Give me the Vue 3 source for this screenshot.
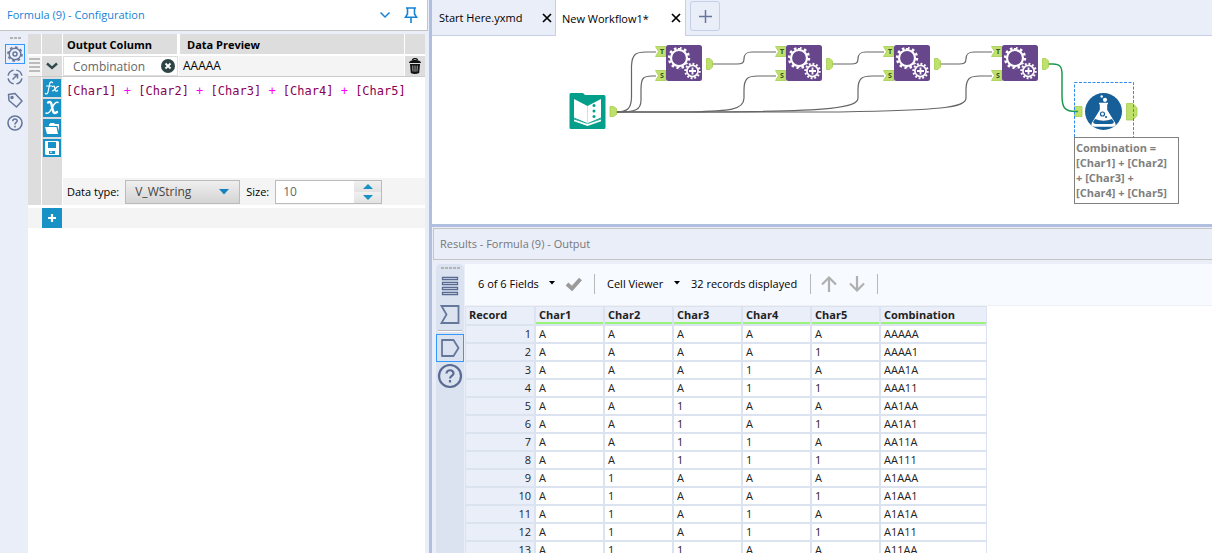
<script setup>
import { ref } from 'vue'

const outputColumn = ref('Combination')
const dataType = ref('V_WString')
const size = ref('10')

const tokens = ['[Char1]', '+', '[Char2]', '+', '[Char3]', '+', '[Char4]', '+', '[Char5]']

const columns = ['Char1', 'Char2', 'Char3', 'Char4', 'Char5']
const rows = Array.from({ length: 13 }, (_, i) =>
  i.toString(2).padStart(5, '0').replace(/0/g, 'A')
)

const appendTools = [666, 786, 894, 1002]

const wires = [
  'M616 112 C628 112 631 108 631.500 98 V66 C632 54 636 52 646 52 H656',
  'M616 112 C636 112 641 110 641 100 V90 C641 78 643 76 652 76 H656',
  'M616 112 H690 C730 111 744 110 744 98 V90 C744 78 748 76 758 76 H776',
  'M616 112 H720 C830 111 858 108 858 98 V90 C858 78 862 76 872 76 H884',
  'M616 112 H840 C940 110 966 108 966 98 V90 C966 78 970 76 980 76 H992',
  'M712 64 H737 C742 64 744 63 744 59 C744 54 746 52 752 52 H776',
  'M832 64 H851 C856 64 858 63 858 59 C858 54 860 52 866 52 H884',
  'M940 64 H959 C964 64 966 63 966 59 C966 54 968 52 974 52 H992'
]
</script>

<template>
  <div class="app">
    <aside class="config">
      <header class="config-title">
        <h1>Formula (9) - Configuration</h1>
        <button class="plain" aria-label="Window options">
          <svg width="12" height="8" viewBox="0 0 12 8"><path d="M1.500 1.500 6 6l4.500-4.500" fill="none" stroke="#1583d6" stroke-width="1.500" /></svg>
        </button>
        <button class="plain pin" aria-label="Pin panel">
          <svg width="14" height="16" viewBox="0 0 14 16"><path d="M2 1h10M3.500 1v6L1.500 10.200h11L10.500 7V1M7 10.500V16" fill="none" stroke="#1583d6" stroke-width="1.600" /></svg>
        </button>
      </header>
      <div class="config-body">
        <nav class="rail">
          <span class="dots"></span>
          <button class="rail-btn active" aria-label="Configuration">
            <svg width="18" height="18" viewBox="0 0 18 18" fill="none" stroke="#66779c">
              <circle cx="9" cy="9" r="5.800" stroke-width="1.400" />
              <circle cx="9" cy="9" r="7" stroke-width="1.600" pathLength="16" stroke-dasharray="1 1" />
              <circle cx="9" cy="9" r="2" stroke-width="1.500" />
            </svg>
          </button>
          <button class="rail-btn" aria-label="Navigation">
            <svg width="18" height="18" viewBox="0 0 18 18" fill="none" stroke="#66779c" stroke-width="1.500">
              <circle cx="9" cy="9" r="7" pathLength="40" stroke-dasharray="7.500 2.500" stroke-dashoffset="-1.200" />
              <path d="M6.500 11.500 11 7M7.500 6.500h4v4" />
            </svg>
          </button>
          <button class="rail-btn" aria-label="Annotation">
            <svg width="18" height="18" viewBox="0 0 18 18" fill="none" stroke="#66779c" stroke-width="1.500" stroke-linejoin="round">
              <path d="M2.500 3.500 9 2.500l7 7.500-5.500 6L3 9.500z" />
              <circle cx="6" cy="6.500" r="1" fill="#66779c" />
            </svg>
          </button>
          <button class="rail-btn" aria-label="Help">
            <svg width="18" height="18" viewBox="0 0 18 18" fill="none" stroke="#66779c" stroke-width="1.600">
              <circle cx="9" cy="9" r="7" />
              <path d="M6.800 7.200c0-3 4.600-2.800 4.400-.2C11 8.500 9 8.600 9 10.500M9 11.800v1.600" />
            </svg>
          </button>
        </nav>

        <main class="formula">
          <div class="grid head">
            <span class="cell"></span>
            <span class="cell"></span>
            <span class="cell label">Output Column</span>
            <span class="cell label preview">Data Preview</span>
            <span class="cell"></span>
          </div>
          <div class="grid row">
            <span class="grip"><i></i><i></i><i></i><i></i></span>
            <button class="cell square" aria-label="Collapse expression">
              <svg width="14" height="8" viewBox="0 0 14 8"><path d="M2 1.500 7 6l5-4.500" fill="none" stroke="#2f4a4a" stroke-width="2.400" /></svg>
            </button>
            <div class="column-name">
              <input v-model="outputColumn" aria-label="Output Column" />
              <button class="plain" aria-label="Clear column">
                <svg width="14" height="14" viewBox="0 0 14 14"><circle cx="7" cy="7" r="7" fill="#2f4545" /><path d="M4.500 4.500l5 5m0-5l-5 5" stroke="#fff" stroke-width="1.800" /></svg>
              </button>
            </div>
            <span class="value">AAAAA</span>
            <button class="cell square" aria-label="Delete expression">
              <svg width="14" height="16" viewBox="0 0 14 16">
                <path d="M4.500 2.500C4.500 0 9.500 0 9.500 2.500" fill="none" stroke="#111" stroke-width="1.400" />
                <path d="M1 5c0-4 12-4 12 0z" fill="#111" />
                <path d="M2 6h10l-.8 9q-4.200 2-8.400 0z" fill="#111" />
                <path d="M4.700 7.500l.3 6M7 7.500v6.300M9.300 7.500l-.3 6" stroke="#bbb" stroke-width=".9" />
              </svg>
            </button>
          </div>
          <div class="editor">
            <span class="gutter"></span>
            <div class="tools">
              <button class="blue" aria-label="Functions">
                <svg width="18" height="18" viewBox="0 0 18 18" fill="none" stroke="#fff" stroke-width="1.200" stroke-linecap="round">
                  <path d="M9.500 3.500C7.500 1.500 6.700 4 6.200 7L5 13c-.4 2-1.600 2.500-2.600 1.500M3.500 7h5M9.500 7.500c2-1.500 2.200.5 2.500 2.500s1 3 2.500 1.500M15.500 7.500c-2-.8-3.500 4.500-6 4.300" />
                </svg>
              </button>
              <button class="blue" aria-label="Columns and constants">
                <svg width="18" height="18" viewBox="0 0 18 18" fill="none" stroke="#fff" stroke-linecap="round">
                  <path d="M5 3.500c3-1.500 3.500 1 4.200 5s1.300 7 4.800 4.500" stroke-width="2.400" />
                  <path d="M15 3.500c-3-1.500-4.500 3-6 5.500s-3 6.500-6 5" stroke-width="1.500" />
                </svg>
              </button>
              <button class="blue" aria-label="Open expression">
                <svg width="18" height="18" viewBox="0 0 18 18"><path d="M6 7V5.500L7.500 4H11l1 1h4v7l-1.500-5z" fill="#fff" /><path d="M2 8h11.500l1.500 7H4z" fill="#fff" /></svg>
              </button>
              <button class="blue" aria-label="Save expression">
                <svg width="18" height="18" viewBox="0 0 18 18"><path d="M3 2h12l1 1v13H3l-1-1V2z" fill="#fff" /><path d="M5 3h8v6H5zM6 12h6v3H6z" fill="#1791c6" /><path d="M7 12.500h2V14H7z" fill="#fff" opacity=".7" /></svg>
              </button>
            </div>
            <div class="expression">
              <div class="code" contenteditable="true" role="textbox" aria-label="Expression" spellcheck="false"><template v-for="(t, i) in tokens" :key="i"><span :class="t === '+' ? 'op' : 'field'">{{ t }}</span>{{ i < tokens.length - 1 ? ' ' : '' }}</template></div>
              <div class="type-row">
                <label for="dtype">Data type:</label>
                <div class="select">
                  <select id="dtype" v-model="dataType"><option>V_WString</option></select>
                  <svg width="10" height="6" viewBox="0 0 10 6"><path d="M0 0h10L5 5.500z" fill="#1583c0" /></svg>
                </div>
                <label for="size">Size:</label>
                <div class="spin">
                  <input id="size" v-model="size" />
                  <div class="spin-buttons">
                    <button aria-label="Increase"><svg width="10" height="5" viewBox="0 0 10 5"><path d="M0 5h10L5 0z" fill="#1791c6" /></svg></button>
                    <button aria-label="Decrease"><svg width="10" height="5" viewBox="0 0 10 5"><path d="M0 0h10L5 5z" fill="#1791c6" /></svg></button>
                  </div>
                </div>
              </div>
            </div>
          </div>
          <div class="add-row">
            <button aria-label="Add expression">
              <svg width="10" height="10" viewBox="0 0 10 10"><path d="M5 1v8M1 5h8" stroke="#fff" stroke-width="2.200" /></svg>
            </button>
          </div>
        </main>
      </div>
    </aside>

    <section class="work">
      <div class="tabs">
        <div class="tab">
          <button class="plain name">Start Here.yxmd</button>
          <button class="plain" aria-label="Close Start Here.yxmd"><svg width="10" height="10" viewBox="0 0 10 10"><path d="M1 1l8 8M9 1L1 9" stroke="#000" stroke-width="1.700" /></svg></button>
        </div>
        <div class="tab current">
          <button class="plain name">New Workflow1*</button>
          <button class="plain" aria-label="Close New Workflow1"><svg width="10" height="10" viewBox="0 0 10 10"><path d="M1 1l8 8M9 1L1 9" stroke="#000" stroke-width="1.700" /></svg></button>
        </div>
        <button class="new-tab" aria-label="New workflow"><svg width="13" height="13" viewBox="0 0 13 13"><path d="M6.500 0v13M0 6.500h13" stroke="#66779c" stroke-width="1.500" /></svg></button>
      </div>

      <div class="canvas">
        <svg class="diagram" aria-label="Workflow">
          <g transform="translate(-432 -36)">
            <g fill="none" stroke="#666" stroke-width="1.200">
              <path v-for="w in wires" :key="w" :d="w" />
            </g>
            <path d="M1048 64 H1053 C1060 64 1062 67 1062 74 V96 C1062 108 1065 111.500 1076 111.500" fill="none" stroke="#1a9a50" stroke-width="1.500" />

            <g fill="#bfe16b" stroke="#a5cd52" stroke-width=".8">
              <path d="M610 106.500h3.500l3 2v6l-3 2H610z" />
              <path d="M1074.500 106.500h7.500v10h-7.500z" />
              <path d="M1126.500 103.500h6.500l4 4.500v7.500l-4 4.500h-6.500z" />
            </g>
            <path d="M1074 111.500h4" stroke="#1a9a50" stroke-width="1.500" />

            <g>
              <path d="M571 93h12l2 2h19q1.500 0 1.500 1.500v31q0 1.500-1.500 1.500H571q-1.500 0-1.500-1.500v-33q0-1.500 1.500-1.500z" fill="#049f8b" />
              <path d="M574 99l13.500 7 13.500-7v19.500l-13.500 5.500-13.500-5.500z" fill="#fff" />
              <path d="M574 118l13.500 5.700 13.500-5.700" fill="none" stroke="#049f8b" stroke-width="1" />
              <path d="M574 119.500l13.500 4.500 13.500-4.500v1.700l-13.500 4.800-13.500-4.800z" fill="#fff" />
              <path d="M587.500 106v18" stroke="#a9dcd5" stroke-width=".7" />
              <g fill="#049f8b"><circle cx="594" cy="105.500" r="1.500" /><circle cx="594" cy="111" r="1.500" /><circle cx="594" cy="116.500" r="1.500" /></g>
            </g>

            <g v-for="x in appendTools" :key="x" :transform="`translate(${x} 45)`">
              <g fill="#bfe16b" stroke="#a5cd52" stroke-width=".8">
                <path d="M-10.500 1.500H0v10h-10.500l3-5z" />
                <path d="M-10.500 25.500H0v10h-10.500l3-5z" />
                <path d="M40.500 13.500H44l2.500 2.500v6l-2.500 2.500h-3.500z" />
              </g>
              <text class="port" x="-4" y="9">T</text>
              <text class="port" x="-4" y="33">S</text>
              <rect width="36" height="36" rx="2.500" fill="#68468c" />
              <g fill="none" stroke="#fff">
                <circle cx="13" cy="13" r="8" stroke-width="2.200" />
                <circle cx="13" cy="13" r="9.900" stroke-width="2.600" pathLength="24" stroke-dasharray="1 1" />
                <circle cx="26.500" cy="26" r="9" fill="#68468c" stroke="none" />
                <circle cx="26.500" cy="26" r="5.600" stroke-width="1.700" />
                <circle cx="26.500" cy="26" r="7.200" stroke-width="2" pathLength="24" stroke-dasharray="1 1" />
                <path d="M26.500 22.500v7M23 26h7" stroke-width="1.800" />
              </g>
            </g>

            <g>
              <rect x="1074.500" y="82.500" width="59" height="56" fill="none" stroke="#2f8cf0" stroke-dasharray="3 1.500" />
              <circle cx="1103.500" cy="111.500" r="18.500" fill="#175f99" />
              <path d="M1099 103.500h9M1100.500 104v6l-8 13q-1.500 3 1.800 3h18.400q3.300 0 1.800-3l-8-13v-6z" fill="#fff" stroke="#fff" stroke-width="1.400" />
              <path d="M1095 119q8.500 3.500 17 0l2 3q-.3 2-3 2h-15q-2.700 0-3-2z" fill="#175f99" />
              <circle cx="1102.500" cy="114" r="2" fill="#fff" stroke="#175f99" stroke-width="1.200" />
              <circle cx="1106" cy="117" r="1.100" fill="#175f99" />
              <circle cx="1105" cy="99.800" r="2.100" fill="#fff" /><circle cx="1101.700" cy="96.500" r="1.200" fill="#fff" />
            </g>
          </g>
        </svg>
        <div class="annotation">Combination = [Char1] + [Char2] + [Char3] + [Char4] + [Char5]</div>
      </div>

      <div class="results">
        <h2>Results - Formula (9) - Output</h2>
        <div class="results-body">
          <nav class="side">
            <span class="dots wide"></span>
            <button aria-label="Messages">
              <svg width="22" height="22" viewBox="0 0 22 22" fill="none" stroke="#5a6b93" stroke-width="1.300"><path d="M3.500 2.500h15v2.200h-15zM3.500 7.500h15v2.200h-15zM3.500 12.500h15v2.200h-15zM3.500 17.500h15v2.200h-15z" /></svg>
            </button>
            <button aria-label="Input anchor">
              <svg width="22" height="22" viewBox="0 0 22 22" fill="none" stroke="#66779c" stroke-width="1.800"><path d="M2.500 3h17v17h-17l5-8.500z" /></svg>
            </button>
            <hr />
            <button class="active" aria-label="Output anchor">
              <svg width="22" height="22" viewBox="0 0 22 22" fill="none" stroke="#66779c" stroke-width="1.800" stroke-linejoin="round"><path d="M3 3h11.500l5 8-5 8H3z" /></svg>
            </button>
            <button aria-label="Help">
              <svg width="26" height="26" viewBox="0 0 26 26" fill="none" stroke="#5a6b93" stroke-width="2.200"><circle cx="13" cy="13" r="11" /><path d="M9.500 10.500c0-4.500 7.200-4.200 7 0-.2 2.500-3.500 2.500-3.500 5M13 17v2.500" /></svg>
            </button>
          </nav>
          <div class="data">
            <div class="toolbar">
              <button class="plain menu fields">6 of 6 Fields <svg width="6" height="4" viewBox="0 0 6 4"><path d="M0 0h6L3 3.500z" /></svg></button>
              <button class="plain check" aria-label="Apply"><svg width="18" height="14" viewBox="0 0 18 14"><path d="M2 7l5 4.500L15.500 2" fill="none" stroke="#9b9b9b" stroke-width="4" /></svg></button>
              <span class="sep"></span>
              <button class="plain menu viewer">Cell Viewer <svg width="6" height="4" viewBox="0 0 6 4"><path d="M0 0h6L3 3.500z" /></svg></button>
              <span class="count">32 records displayed</span>
              <span class="sep"></span>
              <button class="plain arrow" aria-label="Previous"><svg width="16" height="16" viewBox="0 0 16 16"><path d="M8 16V2M1 8.500L8 1.500l7 7" fill="none" stroke="#b0b0b0" stroke-width="2.200" /></svg></button>
              <button class="plain arrow" aria-label="Next"><svg width="16" height="16" viewBox="0 0 16 16"><path d="M8 0v14M1 7.500l7 7 7-7" fill="none" stroke="#b0b0b0" stroke-width="2.200" /></svg></button>
              <span class="sep"></span>
            </div>
            <div class="table-wrap">
              <table>
                <colgroup>
                  <col class="c-record" />
                  <col v-for="c in columns" :key="c" class="c-char" />
                  <col class="c-combo" />
                </colgroup>
                <thead>
                  <tr>
                    <th scope="col">Record</th>
                    <th v-for="c in columns" :key="c" scope="col" class="ok">{{ c }}</th>
                    <th scope="col" class="ok">Combination</th>
                  </tr>
                </thead>
                <tbody>
                  <tr v-for="(r, i) in rows" :key="r">
                    <th scope="row">{{ i + 1 }}</th>
                    <td v-for="(c, j) in columns" :key="c">{{ r[j] }}</td>
                    <td>{{ r }}</td>
                  </tr>
                </tbody>
              </table>
            </div>
          </div>
        </div>
      </div>
    </section>
  </div>
</template>

<style>
body {
  margin: 0;
  overflow: hidden;
}
</style>

<style scoped>
* {
  box-sizing: border-box;
}
.app {
  display: flex;
  height: 100vh;
  background: #eaeef9;
  font-family: "Open Sans", "Noto Sans", sans-serif;
  font-size: 11px;
  color: #000;
}
button,
input,
select {
  font: inherit;
  margin: 0;
  padding: 0;
  border: 0;
  background: none;
}
svg {
  display: block;
  flex: none;
}
.plain {
  display: flex;
  align-items: center;
}
h1,
h2 {
  margin: 0;
  font-size: 11px;
  font-weight: 400;
}

/* Configuration panel */
.config {
  display: flex;
  flex-direction: column;
  flex: 0 0 432px;
  border-right: 3px solid #b0bfe0;
}
.config-title {
  display: flex;
  align-items: center;
  gap: 13px;
  height: 31px;
  margin-right: 1px;
  padding: 0 9px 0 7px;
  background: #fff;
  border: solid #c4c4c4;
  border-width: 0 1px 1px 0;
}
.config-title h1 {
  flex: 1;
  padding-bottom: 1px;
  color: #1583d6;
}
.config-body {
  display: flex;
  flex: 1;
  padding: 3px 4px 0 0;
}
.rail {
  display: flex;
  flex-direction: column;
  align-items: center;
  flex: 0 0 28px;
  gap: 3px;
  padding: 3px 0 0 2px;
}
.dots {
  width: 11px;
  height: 2px;
  margin-bottom: 2px;
  background: repeating-linear-gradient(90deg, #b4b4b4 0 3px, transparent 3px 4px);
}
.rail-btn {
  display: grid;
  place-items: center;
  width: 20px;
  height: 20px;
}
.rail-btn.active {
  border: 1px solid #3399ff;
}
.formula {
  flex: 1;
  background: #fff;
  font-size: 12px;
}
.grid {
  display: grid;
  grid-template-columns: 13px 20px 115px 1fr 20px;
  column-gap: 1px;
}
.cell {
  background: #ddd;
}
.head .cell {
  height: 20px;
}
.head .label {
  padding-left: 4px;
  margin-right: 1px;
  font-weight: 700;
  font-size: 11px;
  line-height: 21px;
}
.head .preview {
  padding-left: 7px;
  margin: 0 0 0 1px;
}
.row {
  padding-top: 2px;
  border-bottom: 1px solid #ccc;
}
.row > * {
  height: 20px;
}
.square {
  display: grid;
  place-items: center;
}
.grip {
  display: flex;
  flex-direction: column;
  gap: 2px;
  padding: 2px 1px;
  background: #f4f4f4;
}
.grip i {
  height: 2px;
  background: #bbb;
}
.column-name {
  display: flex;
  align-items: center;
  border: 1px solid #ddd;
  padding-right: 2px;
}
.column-name input {
  flex: 1;
  min-width: 0;
  height: 18px;
  padding-left: 9px;
  color: #666;
}
.value {
  padding-left: 4px;
  line-height: 20px;
  background: #f4f4f4;
}
.editor {
  display: flex;
  gap: 1px;
}
.gutter {
  width: 13px;
  background: #ddd;
}
.tools {
  display: flex;
  flex-direction: column;
  gap: 2px;
  width: 20px;
  padding: 2px 1px;
  background: #ddd;
}
.blue {
  width: 18px;
  height: 18px;
  background: #1791c6;
}
.expression {
  display: flex;
  flex-direction: column;
  flex: 1;
}
.code {
  flex: 1;
  min-height: 101px;
  padding: 4px 3px;
  font: 12px/20px "DejaVu Sans Mono", "Liberation Mono", monospace;
  white-space: pre-wrap;
  outline: none;
}
.field {
  color: #8b0056;
}
.op {
  color: #f0f;
}
.type-row {
  display: flex;
  align-items: center;
  gap: 6px;
  height: 27px;
  padding-left: 4px;
  background: #f4f4f4;
}
.type-row label {
  font-size: 11px;
}
.select {
  display: flex;
  align-items: center;
  width: 115px;
  height: 24px;
  padding-right: 10px;
  border: 1px solid #bbb;
  background: linear-gradient(#efefef, #d4d4d4);
}
.select select {
  appearance: none;
  flex: 1;
  height: 22px;
  padding-left: 9px;
  font-size: 12px;
  color: #444;
}
.spin {
  display: flex;
  width: 107px;
  height: 24px;
  border: 1px solid #bbb;
  background: #fff;
}
.spin input {
  flex: 1;
  min-width: 0;
  padding-left: 7px;
  color: #666;
}
.spin-buttons {
  display: flex;
  flex-direction: column;
  flex: 0 0 27px;
}
.spin-buttons button {
  display: grid;
  place-items: center;
  flex: 1;
  background: linear-gradient(#f0f0f0, #e2e2e2);
}
.add-row {
  margin-top: 3px;
  padding-left: 14px;
  background: #f4f4f4;
}
.add-row button {
  display: grid;
  place-items: center;
  width: 20px;
  height: 20px;
  background: #1791c6;
}

/* Workflow area */
.work {
  display: flex;
  flex-direction: column;
  flex: 1;
  min-width: 0;
}
.tabs {
  display: flex;
  flex: 0 0 36px;
  border-bottom: 1px solid #c5cfe8;
}
.tab {
  display: flex;
  align-items: center;
  justify-content: space-between;
  width: 124px;
  padding: 0 3px 0 7px;
  border-right: 1px solid #c5cfe8;
}
.tab.current {
  width: 130px;
  margin-bottom: -1px;
  padding: 0 4px 0 6px;
  background: #fff;
}
.new-tab {
  display: grid;
  place-items: center;
  width: 30px;
  height: 30px;
  margin: 1px 0 0 4px;
  border: 1px solid #c5cfe8;
  border-radius: 3px;
}
.canvas {
  position: relative;
  flex: 0 0 188px;
  background: #fff;
  overflow: hidden;
}
.diagram {
  width: 100%;
  height: 100%;
}
.port {
  font: 700 7px "Open Sans", sans-serif;
  text-anchor: middle;
  fill: #33502a;
}
.annotation {
  position: absolute;
  left: 642px;
  top: 101px;
  width: 105px;
  padding: 2px 8px 3px 1px;
  border: 1px solid #808080;
  background: #fff;
  font-weight: 700;
  line-height: 15px;
  color: #808080;
}

/* Results panel */
.results {
  display: flex;
  flex-direction: column;
  flex: 1;
  min-height: 0;
  border-top: 3px solid #b0bfe0;
}
.results h2 {
  flex: 0 0 32px;
  margin: 1px 0 4px 1px;
  padding-left: 6px;
  border: solid #c4c4c4;
  border-width: 1px 0 1px 1px;
  line-height: 29px;
  color: #777;
}
.results-body {
  display: flex;
  flex: 1;
  min-height: 0;
}
.side {
  display: flex;
  flex-direction: column;
  align-items: center;
  flex: 0 0 28px;
  margin-left: 4px;
  padding-top: 3px;
  background: #dbe2f0;
  border-radius: 5px 5px 0 0;
}
.dots.wide {
  width: 19px;
  margin-bottom: 3px;
}
.side button {
  display: grid;
  place-items: center;
  width: 28px;
  height: 28px;
}
.side button.active {
  border: 1px solid #3399ff;
}
.side hr {
  width: 24px;
  height: 2px;
  margin: 2px 0;
  border: 0;
  border-top: 1px solid #b8b8b8;
  background: #fff;
}
.data {
  display: flex;
  flex-direction: column;
  flex: 1;
  min-width: 0;
  margin-left: 1px;
  background: #fff;
}
.toolbar {
  display: flex;
  align-items: center;
  flex: 0 0 42px;
  padding: 0 0 1px 13px;
  background: #f7faff;
  border-bottom: 1px solid #eef0f4;
}
.menu,
.count {
  padding-bottom: 2px;
}
.menu {
  justify-content: space-between;
}
.fields {
  width: 77px;
}
.check {
  margin: 0 11px 0 10px;
}
.sep {
  width: 1px;
  height: 20px;
  background: #b8b8b8;
}
.viewer {
  width: 73px;
  margin: 0 11px 0 12px;
}
.count {
  width: 119px;
}
.arrow {
  margin-left: 10px;
}
.arrow + .arrow {
  margin: 0 12px;
}
.table-wrap {
  flex: 1;
  min-height: 0;
  overflow: hidden;
}
table {
  table-layout: fixed;
  width: 522px;
  border-collapse: separate;
  border-spacing: 0;
  border-top: 1px solid #dbe2f0;
  border-left: 1px solid #dbe2f0;
}
.c-record {
  width: 70px;
}
.c-char {
  width: 69px;
}
.c-combo {
  width: 106px;
}
th,
td {
  height: 18px;
  padding: 0 3px;
  border: solid #dbe2f0;
  border-width: 0 2px 2px 0;
  font-size: 11px;
  line-height: 16px;
  text-align: left;
  color: #222;
}
td:last-child,
th:last-child {
  border-right-width: 1px;
}
th {
  background: #eaeef9;
}
thead th {
  height: 19px;
  padding-bottom: 2px;
  line-height: 15px;
}
.ok {
  box-shadow: inset 0 -2px #98f57a;
}
tbody th {
  font-weight: 400;
  text-align: right;
}
</style>
